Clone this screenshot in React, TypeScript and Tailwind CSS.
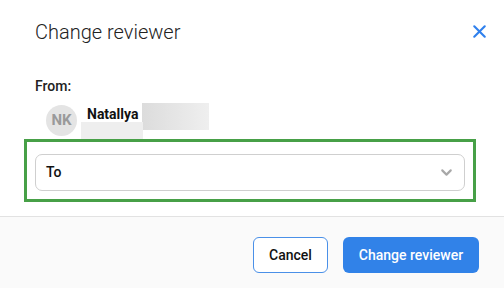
import { ChevronDown, X } from "lucide-react"

export default function App() {
  return (
    <div className="w-[504px] h-[288px] bg-white flex flex-col font-['Roboto',sans-serif] text-[#222] overflow-hidden">
      {/* header */}
      <div className="h-[63px] flex items-center justify-between pl-[35px] pr-[14px]">
        <h2 className="text-[20px] font-light text-[#222] leading-none">Change reviewer</h2>
        <button className="w-[22px] h-[22px] flex items-center justify-center text-[#2f80ed]">
          <X size={21} strokeWidth={2.4} />
        </button>
      </div>

      {/* body */}
      <div className="flex flex-col h-[153px]">
        <div className="pl-[35px] mt-[15px] text-[14px] font-medium leading-[17px] text-[#222]">From:</div>
        <div className="flex pl-[46px] mt-[8px] gap-[4px]">
          <div className="w-[31px] h-[31px] mt-[2px] rounded-full bg-[#e4e4e4] flex items-center justify-center text-[15px] font-bold text-[#9a9a9a]">
            NK
          </div>
          <div className="flex flex-col">
            <div className="flex items-start">
              <span className="text-[14px] font-bold leading-[16px] ml-[6px] mt-[3px] text-[#111]">Natallya</span>
              <span className="ml-[4px] w-[67px] h-[27px] bg-gradient-to-r from-[#dcdcdc] to-[#efefef]" />
            </div>
            <span className="-mt-[8px] w-[62px] h-[17px] bg-[#eeeeee]" />
          </div>
        </div>

        <div className="mx-[24px] w-[452px] h-[63px] border-[3px] border-[#47a047] pt-[12px] px-[8px] pb-[8px]">
          <div className="h-[37px] rounded-[7px] border border-[#cfcfcf] bg-white flex items-center justify-between pl-[10px] pr-[9px]">
            <span className="text-[14px] font-medium text-[#111]">To</span>
            <ChevronDown size={17} strokeWidth={3} className="text-[#a8a8a8]" />
          </div>
        </div>
      </div>

      {/* footer */}
      <div className="flex-1 border-t border-[#e2e2e2] bg-[#fafafa] flex items-start justify-end gap-[15px] pr-[25px] pt-[20px]">
        <button className="w-[75px] h-[36px] rounded-[6px] border border-[#4a90e8] bg-white text-[14px] font-medium text-[#111]">
          Cancel
        </button>
        <button className="w-[136px] h-[36px] rounded-[6px] bg-[#3182e8] text-[14px] font-medium text-white">
          Change reviewer
        </button>
      </div>
    </div>
  )
}
